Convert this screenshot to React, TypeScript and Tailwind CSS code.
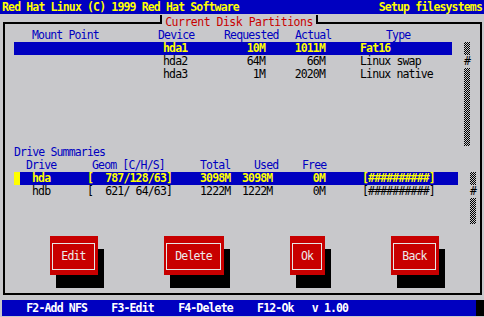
const checker =
  "w-[6px] bg-[image:repeating-conic-gradient(#000_0%_25%,transparent_0%_50%)] bg-[length:2px_2px]";

function Checker({ h }: { h: string }) {
  return <div className={`${checker} ${h}`} />;
}

function Thumb() {
  return <div className="w-[6px] h-[13px] leading-[13px] text-center text-black">#</div>;
}

function Button({ label, w }: { label: string; w: string }) {
  return (
    <div className={`${w} h-[39px] bg-[#c80000] shadow-[6px_13px_0_0_#000] pt-[7px] pb-[5px] pl-[2px] pr-[3px]`}>
      <div className="h-full border border-[#e6e6e6] flex items-center justify-center text-[#ececec]">
        {label}
      </div>
    </div>
  );
}

const partitions = [
  { dev: "hda1", req: "10M", act: "1011M", type: "Fat16", sel: true },
  { dev: "hda2", req: "64M", act: "66M", type: "Linux swap", sel: false },
  { dev: "hda3", req: "1M", act: "2020M", type: "Linux native", sel: false },
];

const drives = [
  { name: "hda", geom: "[  787/128/63]", total: "3098M", used: "3098M", free: "0M", sel: true },
  { name: "hdb", geom: "[  621/ 64/63]", total: "1222M", used: "1222M", free: "0M", sel: false },
];

export default function App() {
  return (
    <div className="relative w-[484px] h-[317px] overflow-hidden bg-[#c8c8cb] font-['DejaVu_Sans_Mono',monospace] text-[11.5px] tracking-[-0.85px] text-black">
      {/* Title bar */}
      <div className="h-[14px] bg-[#0000c0] flex justify-between px-[2px] leading-[14px] font-bold text-[#ffff00] whitespace-pre">
        <span>Red Hat Linux (C) 1999 Red Hat Software</span>
        <span>Setup filesystems</span>
      </div>

      {/* Window tab */}
      <div className="absolute left-[160px] top-[15px] w-[158px] h-[9px] bg-[#c8c8cb] border-x-2 border-black z-10">
        <div className="absolute left-0 right-0 top-[1px] flex justify-center">
          <span className="bg-[#c8c8cb] leading-[13px] text-[#c80000] tracking-[-0.5px] px-[2px]">Current Disk Partitions</span>
        </div>
      </div>

      {/* Window frame */}
      <div className="mt-[8px] ml-[3px] w-[479px] h-[273px] border-2 border-black pt-[5px]">
        {/* Partitions */}
        <div className="flex h-[117px]">
          <div className="ml-[9px] w-[438px]">
            <div className="flex h-[13px] leading-[13px] text-[#0000c0] whitespace-pre">
              <span className="ml-[18px] w-[126px]">Mount Point</span>
              <span className="w-[66px]">Device</span>
              <span className="w-[71px]">Requested</span>
              <span className="w-[91px]">Actual</span>
              <span>Type</span>
            </div>
            {partitions.map((p) => (
              <div
                key={p.dev}
                className={`flex h-[13px] leading-[13px] whitespace-pre ${p.sel ? "bg-[#0000c0] text-[#ffff00] font-bold" : ""}`}
              >
                <span className="ml-[149px] w-[67px]">{p.dev}</span>
                <span className="w-[35px] text-right">{p.req}</span>
                <span className="w-[60px] text-right">{p.act}</span>
                <span className="ml-[35px]">{p.type}</span>
              </div>
            ))}
          </div>
          <div className="ml-[12px] mt-[13px] flex flex-col">
            <Checker h="h-[13px]" />
            <Thumb />
            <Checker h="h-[78px]" />
          </div>
        </div>

        {/* Drive summaries */}
        <div className="flex h-[78px]">
          <div className="ml-[9px] w-[444px]">
            <div className="h-[13px] leading-[13px] text-[#0000c0]">Drive Summaries</div>
            <div className="flex h-[13px] leading-[13px] text-[#0000c0] whitespace-pre">
              <span className="ml-[12px] w-[66px]">Drive</span>
              <span className="w-[108px]">Geom [C/H/S]</span>
              <span className="w-[54px]">Total</span>
              <span className="w-[48px]">Used</span>
              <span>Free</span>
            </div>
            {drives.map((d) => (
              <div key={d.name} className="flex h-[13px] leading-[13px] whitespace-pre">
                <span className={`w-[6px] ${d.sel ? "bg-[#ffff00]" : ""}`} />
                <div className={`flex flex-1 ${d.sel ? "bg-[#0000c0] text-[#ffff00] font-bold" : ""}`}>
                  <span className="ml-[12px] w-[55px]">{d.name}</span>
                  <span className="w-[113px]">{d.geom}</span>
                  <span className="w-[42px]">{d.total}</span>
                  <span className="w-[60px]">{d.used}</span>
                  <span className="w-[23px] text-right">{d.free}</span>
                  <span className="ml-[37px]">[##########]</span>
                </div>
              </div>
            ))}
          </div>
          <div className="ml-[12px] mt-[26px] flex flex-col">
            <Checker h="h-[13px]" />
            <Thumb />
            <Checker h="h-[26px]" />
          </div>
        </div>

        {/* Buttons */}
        <div className="mt-[12px] flex pl-[45px] gap-[66px]">
          <Button label="Edit" w="w-[48px]" />
          <Button label="Delete" w="w-[60px]" />
          <Button label="Ok" w="w-[35px]" />
          <Button label="Back" w="w-[48px]" />
        </div>
      </div>

      {/* Status bar */}
      <div className="mt-[5px] flex h-[16px]">
        <div className="ml-[2px] w-[474px] bg-[#0000c0] leading-[16px] font-bold text-white whitespace-pre">
          {"    F2-Add NFS    F3-Edit    F4-Delete    F12-Ok   v 1.00"}
        </div>
        <div className="flex-1 bg-black" />
      </div>
    </div>
  );
}
